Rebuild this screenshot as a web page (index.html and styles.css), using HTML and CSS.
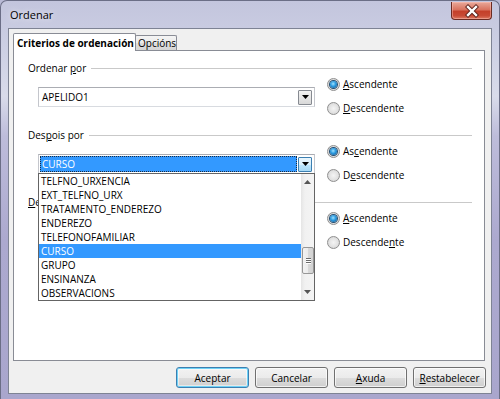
FILE: index.html
```html
<!DOCTYPE html>
<html>
<head>
<meta charset="utf-8">
<link rel="stylesheet" href="styles.css">
</head>
<body>
<div class="window">
  <div class="titlebar">
    <span class="title">Ordenar</span>
    <div class="close">
      <svg width="39" height="16" viewBox="0 0 39 16">
        <path d="M16 4 L24 12 M24 4 L16 12" stroke="#5a1f18" stroke-width="4.2" stroke-linecap="square"/>
        <path d="M16 4 L24 12 M24 4 L16 12" stroke="#ffffff" stroke-width="2.4" stroke-linecap="square"/>
      </svg>
    </div>
  </div>
  <div class="client">
    <div class="tabs">
      <div class="tab tab-active">Criterios de ordenación</div>
      <div class="tab tab-inactive">Opcións</div>
    </div>
    <div class="panel">
      <section class="sect">
        <div class="sect-head"><span>Ordenar <u>p</u>or</span><div class="rule"></div></div>
        <div class="sect-body">
          <div class="combo">
            <span class="combo-text">APELIDO1</span>
            <span class="combo-btn"><svg width="7" height="4" viewBox="0 0 7 4"><path d="M0 0h7L3.5 4z" fill="#000"/></svg></span>
          </div>
          <div class="radios">
            <div class="radio"><span class="dot on"></span><span><u>A</u>scendente</span></div>
            <div class="radio"><span class="dot"></span><span><u>D</u>escendente</span></div>
          </div>
        </div>
      </section>
      <section class="sect">
        <div class="sect-head"><span>Des<u>p</u>ois por</span><div class="rule"></div></div>
        <div class="sect-body">
          <div class="combo combo-focus">
            <span class="combo-text sel">CURSO</span>
            <span class="combo-btn btn-hot"><svg width="7" height="4" viewBox="0 0 7 4"><path d="M0 0h7L3.5 4z" fill="#000"/></svg></span>
          </div>
          <div class="radios">
            <div class="radio"><span class="dot on"></span><span>As<u>c</u>endente</span></div>
            <div class="radio"><span class="dot"></span><span>D<u>e</u>scendente</span></div>
          </div>
        </div>
      </section>
      <section class="sect">
        <div class="sect-head"><span><u>D</u>e</span><div class="rule"></div></div>
        <div class="sect-body">
          <div class="combo">
            <span class="combo-text"></span>
            <span class="combo-btn"><svg width="7" height="4" viewBox="0 0 7 4"><path d="M0 0h7L3.5 4z" fill="#000"/></svg></span>
          </div>
          <div class="radios">
            <div class="radio"><span class="dot on"></span><span><u>A</u>scendente</span></div>
            <div class="radio"><span class="dot"></span><span>Descende<u>n</u>te</span></div>
          </div>
        </div>
      </section>

      <div class="popup">
        <ul class="items">
          <li>TELFNO_URXENCIA</li>
          <li>EXT_TELFNO_URX</li>
          <li>TRATAMENTO_ENDEREZO</li>
          <li>ENDEREZO</li>
          <li>TELEFONOFAMILIAR</li>
          <li class="item-sel">CURSO</li>
          <li>GRUPO</li>
          <li>ENSINANZA</li>
          <li>OBSERVACIONS</li>
        </ul>
        <div class="scrollbar">
          <div class="arrow"><svg width="7" height="4" viewBox="0 0 7 4"><path d="M0 4h7L3.5 0z" fill="#555"/></svg></div>
          <div class="track">
            <div class="thumb"><span></span><span></span><span></span></div>
          </div>
          <div class="arrow"><svg width="7" height="4" viewBox="0 0 7 4"><path d="M0 0h7L3.5 4z" fill="#555"/></svg></div>
        </div>
      </div>
    </div>
    <div class="buttons">
      <div class="btn btn-default">Aceptar</div>
      <div class="btn">Cancelar</div>
      <div class="btn"><u>A</u>xuda</div>
      <div class="btn"><u>R</u>estabelecer</div>
    </div>
  </div>
</div>
</body>
</html>
```

FILE: styles.css
```css
html, body {
  margin: 0;
  padding: 0;
}
body {
  width: 500px;
  height: 399px;
  overflow: hidden;
  font-family: "Open Sans", "Noto Sans", sans-serif;
  font-size: 10px;
  color: #000;
  background: #b9bad6;
}
u { text-decoration: underline; text-underline-offset: 1px; }

.window {
  width: 500px;
  height: 399px;
  box-sizing: border-box;
  border: 1px solid #6b6e86;
  border-bottom: none;
  border-radius: 7px 7px 0 0;
  background: linear-gradient(180deg, #c3c5dd 0%, #cdd0e4 12%, #d9dbea 24%, #bdbcda 34%, #aca9cf 60%, #a9a6cd 100%);
  display: flex;
  flex-direction: column;
}

.titlebar {
  height: 27px;
  display: flex;
  align-items: flex-start;
  justify-content: space-between;
  padding: 0 7px 0 9px;
}
.title {
  margin-top: 6px;
  font-size: 11px;
  color: #000;
  text-shadow: 0 0 6px rgba(255,255,255,0.9);
}
.close {
  margin-top: 1px;
  width: 41px;
  height: 18px;
  box-sizing: border-box;
  border: 1px solid #6b2b22;
  border-top: none;
  border-radius: 0 0 4px 4px;
  background: linear-gradient(180deg, #e9a99a 0%, #d9735f 45%, #c4402a 55%, #c84a34 80%, #dd7a62 100%);
  box-shadow: inset 0 0 0 1px rgba(255,200,190,0.45);
  display: flex;
  align-items: center;
  justify-content: center;
}

.client {
  margin: 0 7px;
  height: 366px;
  box-sizing: border-box;
  border: 1px solid #7e8394;
  background: #f0f0f0;
  padding: 4px 0 0 4px;
}

.tabs {
  display: flex;
  align-items: flex-end;
  height: 17px;
}
.tab {
  box-sizing: border-box;
  border: 1px solid #898c95;
  border-bottom: none;
  border-radius: 2px 2px 0 0;
  white-space: nowrap;
}
.tab-active {
  width: 123px;
  height: 18px;
  margin-bottom: -1px;
  position: relative;
  z-index: 2;
  background: #fff;
  font-weight: bold;
  padding: 2px 0 0 3px;
}
.tab-inactive {
  width: 42px;
  height: 15px;
  margin-left: -1px;
  background: linear-gradient(180deg, #f4f4f4 0%, #ebebeb 50%, #dddddd 51%, #d6d6d6 100%);
  padding: 0 0 0 2px;
  line-height: 14px;
}

.panel {
  position: relative;
  width: 472px;
  height: 311px;
  box-sizing: border-box;
  border: 1px solid #898c95;
  background: #fff;
  padding: 10px 0 0 14px;
}

.sect {
  margin-bottom: 11px;
}
.sect-head {
  height: 14px;
  display: flex;
  align-items: center;
}
.sect-head span { white-space: nowrap; }
.rule {
  flex: 1;
  height: 1px;
  background: #c9c9c9;
  margin: 0 12px 0 5px;
}
.sect-body {
  display: flex;
  align-items: flex-start;
}
.combo {
  margin: 12px 0 0 10px;
  width: 277px;
  height: 20px;
  box-sizing: border-box;
  border: 1px solid #abadb3;
  border-left-color: #c4c6cc;
  border-right-color: #c4c6cc;
  border-bottom-color: #d8dbe0;
  background: #fff;
  display: flex;
  align-items: center;
  padding: 1px 1px 1px 1px;
}
.combo-text {
  flex: 1;
  height: 100%;
  box-sizing: border-box;
  padding-left: 2px;
  display: flex;
  align-items: center;
}
.combo-text.sel {
  background: #3399ff;
  color: #fff;
  outline: 1px dotted #1b2b40;
  outline-offset: -1px;
  margin-right: 1px;
}
.combo-btn {
  width: 14px;
  height: 15px;
  box-sizing: border-box;
  border: 1px solid #868a91;
  border-radius: 1px;
  background: linear-gradient(180deg, #f3f3f3 0%, #e6e6e6 50%, #d8d8d8 100%);
  display: flex;
  align-items: center;
  justify-content: center;
  margin-right: 1px;
}
.combo-btn.btn-hot {
  border-color: #3c7fb1;
  background: linear-gradient(180deg, #eaf6fd 0%, #d9f0fc 50%, #bee6fd 51%, #a7d9f5 100%);
}

.radios {
  margin-left: 12px;
  display: flex;
  flex-direction: column;
  gap: 6px;
}
.radio {
  height: 18px;
  display: flex;
  align-items: center;
  gap: 3px;
  white-space: nowrap;
}
.dot {
  width: 13px;
  height: 13px;
  box-sizing: border-box;
  border-radius: 50%;
  border: 1px solid #8f8f8f;
  background: radial-gradient(circle at 50% 50%, #f4f4f4 0%, #e2e2e2 55%, #cdcdcd 100%);
  display: flex;
  align-items: center;
  justify-content: center;
}
.dot.on::after {
  content: "";
  width: 7px;
  height: 7px;
  border-radius: 50%;
  background: radial-gradient(circle at 45% 40%, #9fe2ff 0%, #2a9ae0 45%, #114f86 100%);
  box-shadow: 0 0 0 1px #234e73;
}

.popup {
  position: absolute;
  left: 24px;
  top: 122px;
  width: 277px;
  height: 128px;
  box-sizing: border-box;
  border: 1px solid #646464;
  background: #fff;
  display: flex;
  z-index: 3;
}
.items {
  list-style: none;
  margin: 0;
  padding: 0;
  flex: 1;
}
.items li {
  height: 14px;
  line-height: 14px;
  padding-left: 2px;
  white-space: nowrap;
}
.items li.item-sel {
  background: #3399ff;
  color: #fff;
}
.scrollbar {
  width: 13px;
  display: flex;
  flex-direction: column;
  background: linear-gradient(90deg, #e5e5e5 0%, #f1f1f1 30%, #f4f4f4 100%);
}
.arrow {
  height: 16px;
  display: flex;
  align-items: center;
  justify-content: center;
}
.track {
  flex: 1;
  display: flex;
  flex-direction: column;
  justify-content: flex-end;
  padding-bottom: 10px;
}
.thumb {
  width: 12px;
  height: 27px;
  margin-left: 1px;
  box-sizing: border-box;
  border: 1px solid #979797;
  border-radius: 2px;
  background: linear-gradient(90deg, #f2f2f2 0%, #ebebeb 50%, #d9d9d9 51%, #d2d2d2 100%);
  display: flex;
  flex-direction: column;
  align-items: center;
  justify-content: center;
  gap: 1px;
}
.thumb span {
  width: 5px;
  height: 1px;
  background: #6a6a6a;
  box-shadow: 0 1px 0 #fff;
}

.buttons {
  display: flex;
  justify-content: flex-end;
  gap: 6px;
  margin-top: 6px;
  padding-right: 5px;
}
.btn {
  width: 73px;
  height: 21px;
  box-sizing: border-box;
  border: 1px solid #707070;
  border-radius: 3px;
  background: linear-gradient(180deg, #f2f2f2 0%, #ebebeb 50%, #dddddd 51%, #cfcfcf 100%);
  box-shadow: inset 0 0 0 1px rgba(255,255,255,0.7);
  display: flex;
  align-items: center;
  justify-content: center;
  white-space: nowrap;
}
.btn-default {
  border-color: #3c7fb1;
  box-shadow: inset 0 0 0 1px #6fd2f7, inset 0 0 0 2px rgba(255,255,255,0.5);
}
```
